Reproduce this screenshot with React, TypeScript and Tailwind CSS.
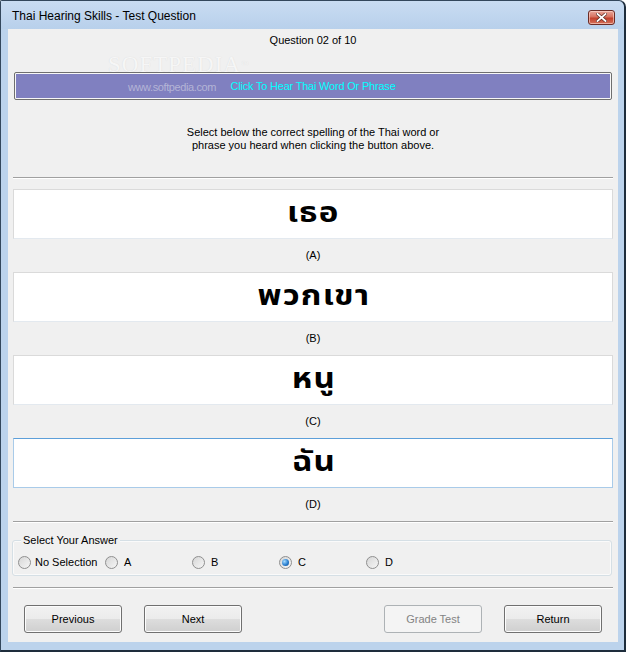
import React from 'react'

const FONT = "font-['Liberation_Sans',Arial,sans-serif]"
const THAI = "font-['Noto_Sans_Thai','Loma','Garuda','Tlwg_Typo','Noto_Sans','DejaVu_Sans',sans-serif]"

const ANSWERS = [
  { word: 'เธอ', label: '(A)' },
  { word: 'พวกเขา', label: '(B)' },
  { word: 'หนู', label: '(C)' },
  { word: 'ฉัน', label: '(D)', focused: true },
]

const CHOICES = ['No Selection', 'A', 'B', 'C', 'D']

function Radio({ checked }: { checked?: boolean }) {
  return (
    <span className="flex items-center justify-center w-[13px] h-[13px] rounded-full border border-[#8f8f8f] bg-[linear-gradient(135deg,#d6d6d6,#f6f6f6)] shrink-0">
      {checked && (
        <span className="w-[7px] h-[7px] rounded-full bg-[radial-gradient(circle_at_35%_35%,#a6dcff,#2a7fd0_55%,#0d4585)]" />
      )}
    </span>
  )
}

function Separator() {
  return <div className="mx-[5px] h-[2px] border-t border-[#a0a0a0] border-b border-b-white" />
}

function Button({ children, disabled }: { children: React.ReactNode; disabled?: boolean }) {
  return (
    <div
      className={
        disabled
          ? 'w-[98px] h-[28px] flex items-center justify-center rounded-[3px] border border-[#adb2b5] bg-[#f4f4f4] text-[#838383]'
          : 'w-[98px] h-[28px] flex items-center justify-center rounded-[3px] border border-[#707070] bg-[linear-gradient(to_bottom,#f2f2f2_0%,#ebebeb_50%,#dddddd_51%,#cfcfcf_100%)] text-black shadow-[inset_0_0_0_1px_#fcfcfc]'
      }
    >
      {children}
    </div>
  )
}

export default function App() {
  return (
    <div className={`w-[626px] h-[652px] flex flex-col bg-[#bcd3ec] border-t border-l border-[#33475c] border-r-2 border-b-2 border-r-[#1e2d3c] border-b-[#1e2d3c] rounded-tr-[7px] rounded-tl-[2px] text-[11px] leading-[13px] text-black ${FONT}`}>
      {/* Title bar */}
      <div className="h-[28px] flex items-center justify-between pl-[11px] pr-[9px] bg-[linear-gradient(to_bottom,#c9dcf2,#b8d0eb)] rounded-tr-[7px]">
        <span className="text-[12px] pt-[3px]">Thai Hearing Skills - Test Question</span>
        <div className="mt-[4px] w-[27px] h-[15px] flex items-center justify-center rounded-[3px] border border-[#6b2b25] bg-[linear-gradient(to_bottom,#e9a79b_0%,#d7715f_45%,#c2402c_55%,#d4715a_100%)] shadow-[inset_0_0_0_1px_rgba(255,220,210,0.6)]">
          <svg width="11" height="9" viewBox="0 0 11 9">
            <path d="M1.5 1 L9.5 8 M9.5 1 L1.5 8" stroke="#5a2a22" strokeWidth="3.2" strokeLinecap="square" />
            <path d="M1.5 1 L9.5 8 M9.5 1 L1.5 8" stroke="#ffffff" strokeWidth="1.8" strokeLinecap="square" />
          </svg>
        </div>
      </div>

      {/* Client area */}
      <div className="relative mx-[7px] mr-[6px] mb-[8px] flex-1 bg-[#f0f0f0] flex flex-col">
        {/* watermark */}
        <div className="absolute left-[100px] top-[25px] text-[23px] leading-[22px] tracking-[1px] text-[#f6f6f6] font-['Liberation_Serif',serif] [text-shadow:0_0_1px_#d8d8d8] pointer-events-none">
          SOFTPEDIA<span className="text-[8px] align-top">™</span>
        </div>

        <div className="pt-[5px] text-center">Question 02 of 10</div>

        <div className="relative mt-[25px] ml-[6px] w-[598px] h-[28px] rounded-[2px] border border-[#6f6f6f] p-[1px] bg-[#f7f7f7]">
          <div className="relative w-full h-full bg-[#8080c0] flex items-center justify-center text-[11px] tracking-[-0.2px] text-[#00ffff]">
            <span className="absolute left-[112px] top-[7px] text-[11px] tracking-[-0.4px] text-[#b4b4d6]">www.softpedia.com</span>
            Click To Hear Thai Word Or Phrase
          </div>
        </div>

        <div className="mt-[26px] text-center">
          Select below the correct spelling of the Thai word or
          <br />
          phrase you heard when clicking the button above.
        </div>

        <div className="mt-[25px]">
          <Separator />
        </div>

        <div className="mt-[10px] flex flex-col">
          {ANSWERS.map(a => (
            <div key={a.label} className="flex flex-col">
              <div
                className={
                  a.focused
                    ? 'mx-[5px] h-[50px] bg-white border border-[#a9cbe9] border-t-[#5d9fd9] flex items-center justify-center'
                    : 'mx-[5px] h-[50px] bg-white border border-[#dadada] border-b-[#e3e9ef] flex items-center justify-center'
                }
              >
                <span className={`inline-block text-[28px] leading-[30px] font-bold tracking-[1px] pl-[1px] scale-x-[1.18] ${THAI}`}>{a.word}</span>
              </div>
              <div className="h-[33px] flex items-center justify-center">{a.label}</div>
            </div>
          ))}
        </div>

        <Separator />

        {/* Group box */}
        <div className="relative mt-[17px] ml-[4px] w-[600px] h-[36px] rounded-[3px] border border-[#d5dfe5] shadow-[inset_0_0_0_1px_#fafafa]">
          <span className="absolute left-[8px] top-[-7px] px-[2px] bg-[#f0f0f0]">Select Your Answer</span>
          <div className="flex items-center pl-[5px] pt-[15px]">
            {CHOICES.map(c => (
              <div key={c} className="w-[87px] flex items-center gap-[4px]">
                <Radio checked={c === 'C'} />
                <span className={c.length === 1 ? 'pl-[2px]' : ''}>{c}</span>
              </div>
            ))}
          </div>
        </div>

        <div className="mt-[11px]">
          <Separator />
        </div>

        <div className="mt-[16px] flex items-center pl-[16px]">
          <Button>Previous</Button>
          <div className="ml-[22px]">
            <Button>Next</Button>
          </div>
          <div className="ml-[142px]">
            <Button disabled>Grade Test</Button>
          </div>
          <div className="ml-[22px]">
            <Button>Return</Button>
          </div>
        </div>
      </div>
    </div>
  )
}
